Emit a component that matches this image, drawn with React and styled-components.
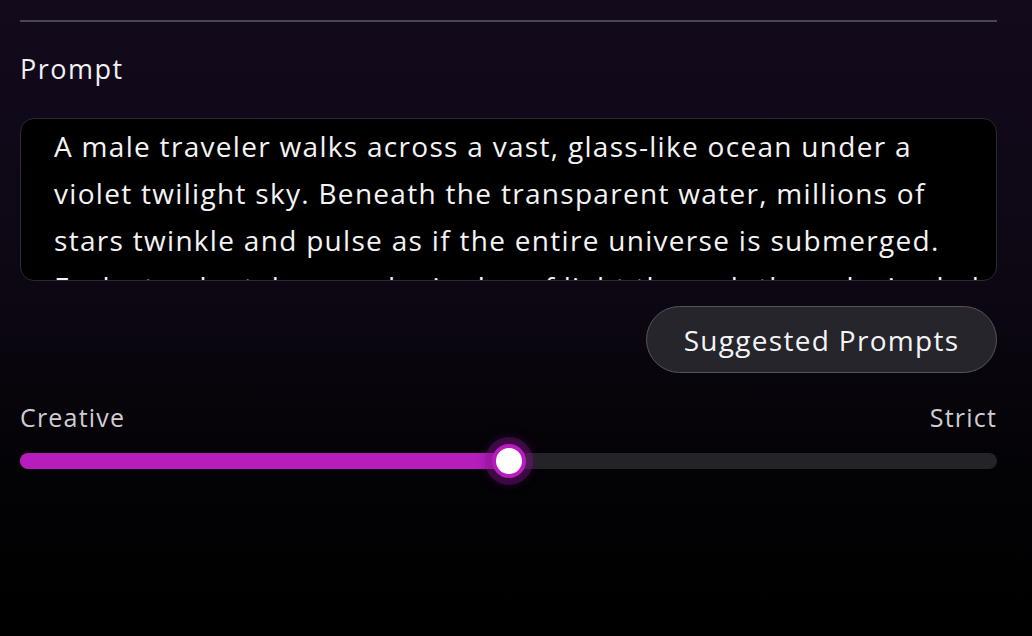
import React from 'react';
import styled, { createGlobalStyle } from 'styled-components';

const GlobalStyle = createGlobalStyle`
  html, body {
    margin: 0;
    padding: 0;
    background: #000;
  }
  body {
    font-family: "Open Sans", "Noto Sans", sans-serif;
    color: #fff;
  }
`;

const Page = styled.div`
  width: 1032px;
  height: 636px;
  box-sizing: border-box;
  padding: 20px 35px 0 20px;
  background: linear-gradient(180deg, #130a1c 0%, #0d0713 45%, #030205 75%, #000 100%);
  overflow: hidden;
`;

const Divider = styled.hr`
  margin: 0;
  border: none;
  height: 2px;
  background: #4a4454;
`;

const Label = styled.div`
  margin-top: 29px;
  font-size: 27px;
  line-height: 36px;
  letter-spacing: 1.5px;
  color: #f2f0f4;
`;

const PromptBox = styled.div`
  margin-top: 31px;
  height: 163px;
  box-sizing: border-box;
  border: 1px solid #2c2a30;
  border-radius: 14px;
  background: #000;
  overflow: hidden;
  padding: 4px 30px 0 33px;
`;

const PromptLine = styled.div`
  font-size: 28px;
  line-height: 47px;
  letter-spacing: 1.3px;
  white-space: nowrap;
  color: #f4f4f4;
`;

const ButtonRow = styled.div`
  display: flex;
  justify-content: flex-end;
  margin-top: 25px;
`;

const PillButton = styled.button`
  height: 67px;
  width: 351px;
  border-radius: 34px;
  border: 1.5px solid #55545c;
  background: #25252b;
  color: #f4f4f6;
  font-family: inherit;
  font-size: 28px;
  letter-spacing: 1.3px;
  cursor: pointer;
`;

const RangeLabels = styled.div`
  display: flex;
  justify-content: space-between;
  margin-top: 26px;
  font-size: 25px;
  line-height: 36px;
  letter-spacing: 1.2px;
  color: #cfcdd2;
`;

const Track = styled.div`
  position: relative;
  margin-top: 18px;
  height: 16px;
  border-radius: 8px;
  background: #242428;
`;

const Fill = styled.div`
  height: 100%;
  border-radius: 8px;
  background: #b71dbd;
`;

const Thumb = styled.div`
  position: absolute;
  top: 50%;
  width: 34px;
  height: 34px;
  box-sizing: border-box;
  border-radius: 50%;
  background: #fff;
  border: 4px solid #b71dbd;
  transform: translate(-50%, -50%);
  box-shadow: 0 0 0 7px rgba(150, 22, 158, 0.3), 0 0 10px 8px rgba(90, 14, 100, 0.3);
`;

const promptLines = [
  'A male traveler walks across a vast, glass-like ocean under a',
  'violet twilight sky. Beneath the transparent water, millions of',
  'stars twinkle and pulse as if the entire universe is submerged.',
  'Each step he takes sends ripples of light through the galaxies below.',
];

const value = 50;

export default function App() {
  return (
    <Page>
      <GlobalStyle />
      <Divider />
      <Label>Prompt</Label>
      <PromptBox>
        {promptLines.map((line) => (
          <PromptLine key={line}>{line}</PromptLine>
        ))}
      </PromptBox>
      <ButtonRow>
        <PillButton>Suggested Prompts</PillButton>
      </ButtonRow>
      <RangeLabels>
        <span>Creative</span>
        <span>Strict</span>
      </RangeLabels>
      <Track>
        <Fill style={{ width: `${value}%` }} />
        <Thumb style={{ left: `${value}%` }} />
      </Track>
    </Page>
  );
}
